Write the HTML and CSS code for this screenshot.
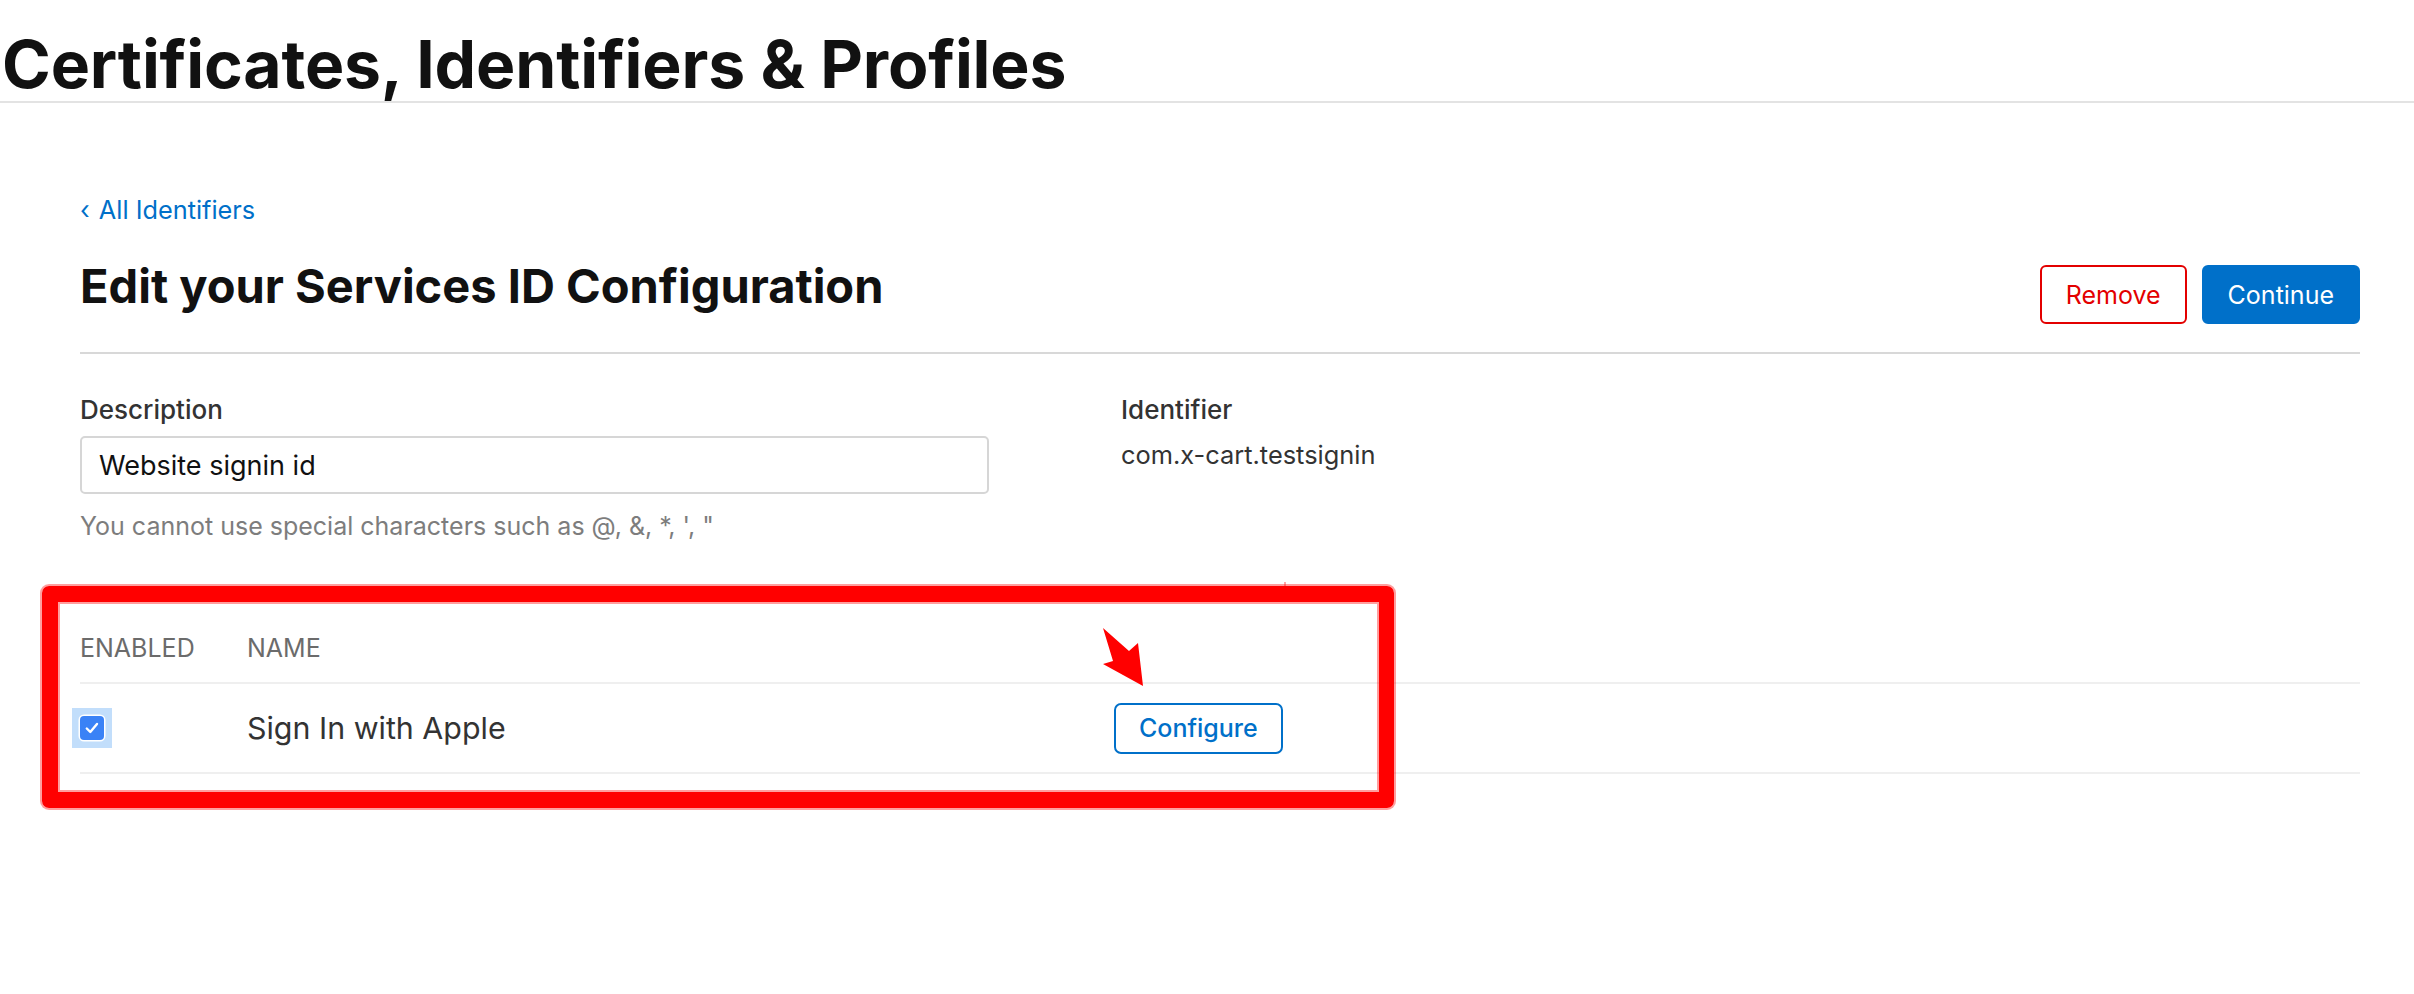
FILE: index.html
```html
<!DOCTYPE html>
<html lang="en">
<head>
<meta charset="utf-8">
<title>Certificates, Identifiers &amp; Profiles</title>
<link rel="stylesheet" href="styles.css">
</head>
<body>
<header class="top">
  <h1 class="top-title">Certificates, Identifiers &amp; Profiles</h1>
</header>
<main class="main">
  <a class="back" href="#"><span class="back-chev">‹</span> All Identifiers</a>
  <div class="title-row">
    <h2 class="page-title">Edit your Services ID Configuration</h2>
    <div class="actions">
      <button class="btn btn-remove" type="button">Remove</button>
      <button class="btn btn-continue" type="button">Continue</button>
    </div>
  </div>
  <div class="fields">
    <div class="field">
      <div class="label">Description</div>
      <input class="input" type="text" value="Website signin id">
      <div class="hint">You cannot use special characters such as @, &amp;, *, ', "</div>
    </div>
    <div class="field">
      <div class="label">Identifier</div>
      <div class="value">com.x-cart.testsignin</div>
    </div>
  </div>
  <section class="caps">
    <div class="caps-head">
      <div class="col-enabled">ENABLED</div>
      <div class="col-name">NAME</div>
    </div>
    <div class="caps-row">
      <div class="col-enabled">
        <span class="focus-ring">
          <span class="checkbox">
            <svg viewBox="0 0 24 24" width="24" height="24"><path d="M6.8 12.5 L10.3 16 L17 8" fill="none" stroke="#fff" stroke-width="2.4" stroke-linecap="round" stroke-linejoin="round"/></svg>
          </span>
        </span>
      </div>
      <div class="col-name row-name">Sign In with Apple</div>
      <div class="col-action"><button class="btn-configure" type="button">Configure</button></div>
    </div>
    <div class="annot-box"></div>
    <span class="annot-tick"></span>
    <svg class="annot-arrow" viewBox="0 0 46 64" width="46" height="64"><polygon points="3,3 29,26 38,18 43,61 3,39 13,36" fill="#ff0000"/></svg>
  </section>
</main>
</body>
</html>
```
FILE: styles.css
```css
* { box-sizing: border-box; }
html, body { margin: 0; padding: 0; background: #fff; }
body {
  min-height: 994px;
  font-family: Inter, "Noto Sans", "Liberation Sans", sans-serif;
  color: #333;
}
.top {
  border-bottom: 2px solid #e3e3e3;
}
.top-title {
  margin: 0;
  padding: 31px 0 4px 2px;
  font-size: 66px;
  line-height: 66px;
  font-weight: 700;
  color: #111;
  letter-spacing: -0.15px;
}
.main {
  padding: 0 54px 200px 80px;
}
.back {
  display: block;
  margin-top: 92px;
  font-size: 25.3px;
  line-height: 30px;
  color: #0070c9;
  text-decoration: none;
}
.back-chev { display: inline-block; margin-right: 2px; }
.title-row {
  display: flex;
  justify-content: space-between;
  align-items: flex-start;
  margin-top: 33px;
  padding-bottom: 28px;
  border-bottom: 2px solid #d8d8d8;
}
.page-title {
  margin: 0;
  font-size: 47px;
  line-height: 56px;
  font-weight: 700;
  color: #111;
}
.actions {
  display: flex;
  gap: 15px;
  margin-top: 7px;
}
.btn {
  height: 59px;
  padding: 0 24px;
  border-radius: 6px;
  font-family: inherit;
  font-size: 25px;
  font-weight: 400;
  cursor: pointer;
}
.btn-remove {
  background: #fff;
  border: 2px solid #e30000;
  color: #e30000;
}
.btn-continue {
  background: #0070c9;
  border: 2px solid #0070c9;
  color: #fff;
}
.fields {
  display: grid;
  grid-template-columns: 909px 1fr;
  column-gap: 132px;
  margin-top: 41px;
}
.label {
  font-size: 26px;
  line-height: 30px;
  font-weight: 500;
  color: #333;
}
.input {
  display: block;
  width: 100%;
  height: 58px;
  margin-top: 11px;
  padding: 0 17px;
  border: 2px solid #d6d6d6;
  border-radius: 5px;
  font-family: inherit;
  font-size: 27px;
  color: #111;
  outline: none;
}
.hint {
  margin-top: 18px;
  font-size: 25px;
  line-height: 28px;
  color: #7d7d7d;
}
.value {
  margin-top: 15px;
  font-size: 25.4px;
  line-height: 30px;
  color: #333;
}
.caps {
  position: relative;
  margin-top: 93px;
}
.caps-head {
  display: flex;
  padding-bottom: 19px;
  border-bottom: 2px solid #efefef;
  font-size: 25px;
  line-height: 30px;
  color: #6b6b6b;
}
.caps-row {
  display: flex;
  align-items: center;
  height: 90px;
  border-bottom: 2px solid #efefef;
}
.col-enabled { width: 167px; display: flex; align-items: center; }
.col-name { width: 867px; }
.row-name {
  font-size: 30.4px;
  color: #333;
}
.focus-ring {
  display: inline-flex;
  margin-left: -8px;
  padding: 8px;
  background: #c2defb;
}
.checkbox {
  display: inline-flex;
  width: 24px;
  height: 24px;
  border-radius: 4px;
  background: #3a82f6;
  box-shadow: 0 0 0 1.5px #fff;
}
.btn-configure {
  height: 51px;
  padding: 0 23px;
  background: #fff;
  border: 2px solid #0070c9;
  border-radius: 7px;
  color: #0070c9;
  font-family: inherit;
  font-size: 25px;
  font-weight: 500;
  cursor: pointer;
}
.annot-box {
  position: absolute;
  left: -38px;
  top: -47px;
  width: 1352px;
  height: 222px;
  border: 16px solid #ff0000;
  border-right-width: 15px;
  border-radius: 7px;
  box-shadow: 0 0 0 2px rgba(255, 0, 0, 0.38), inset 0 0 0 2px rgba(255, 0, 0, 0.38);
  pointer-events: none;
}
.annot-tick {
  position: absolute;
  left: 1204px;
  top: -51px;
  width: 2px;
  height: 4px;
  background: rgba(255, 0, 0, 0.35);
}
.annot-arrow {
  position: absolute;
  left: 1020px;
  top: -8px;
}
```
